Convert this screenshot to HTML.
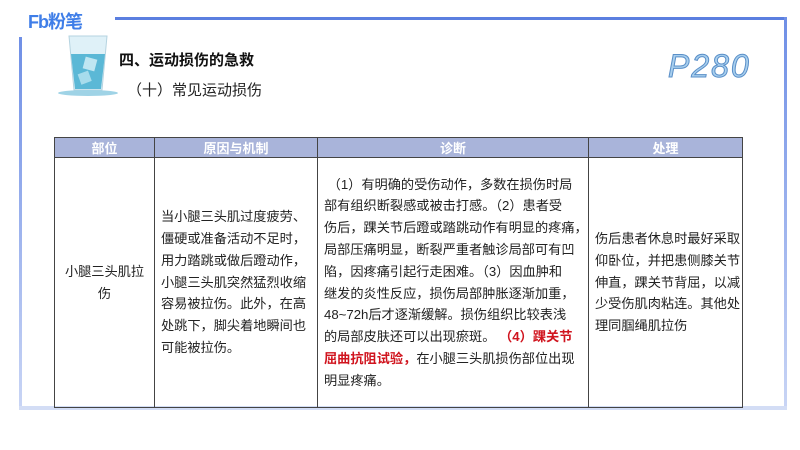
<!DOCTYPE html>
<html><head><meta charset="utf-8"><style>
body{margin:0;width:800px;height:450px;background:#fff;position:relative;overflow:hidden;font-family:"Liberation Sans","Noto Sans CJK SC",sans-serif;color:#222}
.a{position:absolute}
table{border-collapse:collapse;position:absolute;left:54px;top:137px;width:688px;font-size:13.2px;table-layout:fixed}
td,th{border:1px solid #444;vertical-align:middle;overflow:hidden}
th{background:#a9b4da;color:#fff;font-weight:bold;height:18px;padding:0;font-size:13px}
td{height:249px;padding:0 0 0 6px;line-height:21.8px;white-space:nowrap}
.r{color:#d0141e;font-weight:bold}
</style></head><body>
<div class="a" style="left:115px;top:17px;width:671px;height:3px;background:#5b7fe0"></div>
<div class="a" style="left:784px;top:17px;width:3px;height:393px;background:linear-gradient(#6f8fe6,#c9d5f5)"></div>
<div class="a" style="left:19px;top:37px;width:3px;height:373px;background:linear-gradient(#6f8fe6,#c9d5f5)"></div>
<div class="a" style="left:19px;top:406px;width:768px;height:4px;background:#d3ddf5"></div>
<div class="a" style="left:28px;top:8px;font-size:18px;font-weight:bold;color:#3f7ee8;letter-spacing:-1px">Fb粉笔</div>
<svg class="a" style="left:55px;top:34px" width="65" height="64" viewBox="0 0 65 64">
<path d="M14 2 L52 2 L47 56 L19 56 Z" fill="#dff1f8" stroke="#b5d3e0"/>
<path d="M16 20 L50 20 L46 55 L20 55 Z" fill="#5bb8d6"/>
<rect x="29" y="24" width="12" height="12" fill="#bfe6f2" transform="rotate(15 35 30)"/>
<rect x="24" y="38" width="11" height="11" fill="#a7dcec" transform="rotate(-20 30 43)"/>
<ellipse cx="33" cy="59" rx="30" ry="3" fill="#9fd3e6"/>
</svg>
<div class="a" style="left:119px;top:49px;font-size:15px;font-weight:bold;color:#111">四、运动损伤的急救</div>
<div class="a" style="left:127px;top:79px;font-size:15px;color:#222">（十）常见运动损伤</div>
<div class="a" style="left:668px;top:48px;font-size:32px;font-style:italic;color:#a8cfee;-webkit-text-stroke:1px #5a8fc8;letter-spacing:2px">P280</div>
<table>
<colgroup><col style="width:100px"><col style="width:163px"><col style="width:271px"><col style="width:154px"></colgroup>
<tr><th>部位</th><th>原因与机制</th><th>诊断</th><th>处理</th></tr>
<tr><td style="text-align:center;padding:0">小腿三头肌拉<br>伤</td>
<td>当小腿三头肌过度疲劳、<br>僵硬或准备活动不足时，<br>用力踏跳或做后蹬动作，<br>小腿三头肌突然猛烈收缩<br>容易被拉伤。此外，在高<br>处跳下，脚尖着地瞬间也<br>可能被拉伤。</td>
<td>&nbsp;（1）有明确的受伤动作，多数在损伤时局<br>部有组织断裂感或被击打感。（2）患者受<br>伤后，踝关节后蹬或踏跳动作有明显的疼痛，<br>局部压痛明显，断裂严重者触诊局部可有凹<br>陷，因疼痛引起行走困难。（3）因血肿和<br>继发的炎性反应，损伤局部肿胀逐渐加重，<br>48~72h后才逐渐缓解。损伤组织比较表浅<br>的局部皮肤还可以出现瘀斑。 <span class="r">（4）踝关节<br>屈曲抗阻试验，</span>在小腿三头肌损伤部位出现<br>明显疼痛。</td>
<td>伤后患者休息时最好采取<br>仰卧位，并把患侧膝关节<br>伸直，踝关节背屈，以减<br>少受伤肌肉粘连。其他处<br>理同腘绳肌拉伤</td></tr>
</table>
</body></html>
